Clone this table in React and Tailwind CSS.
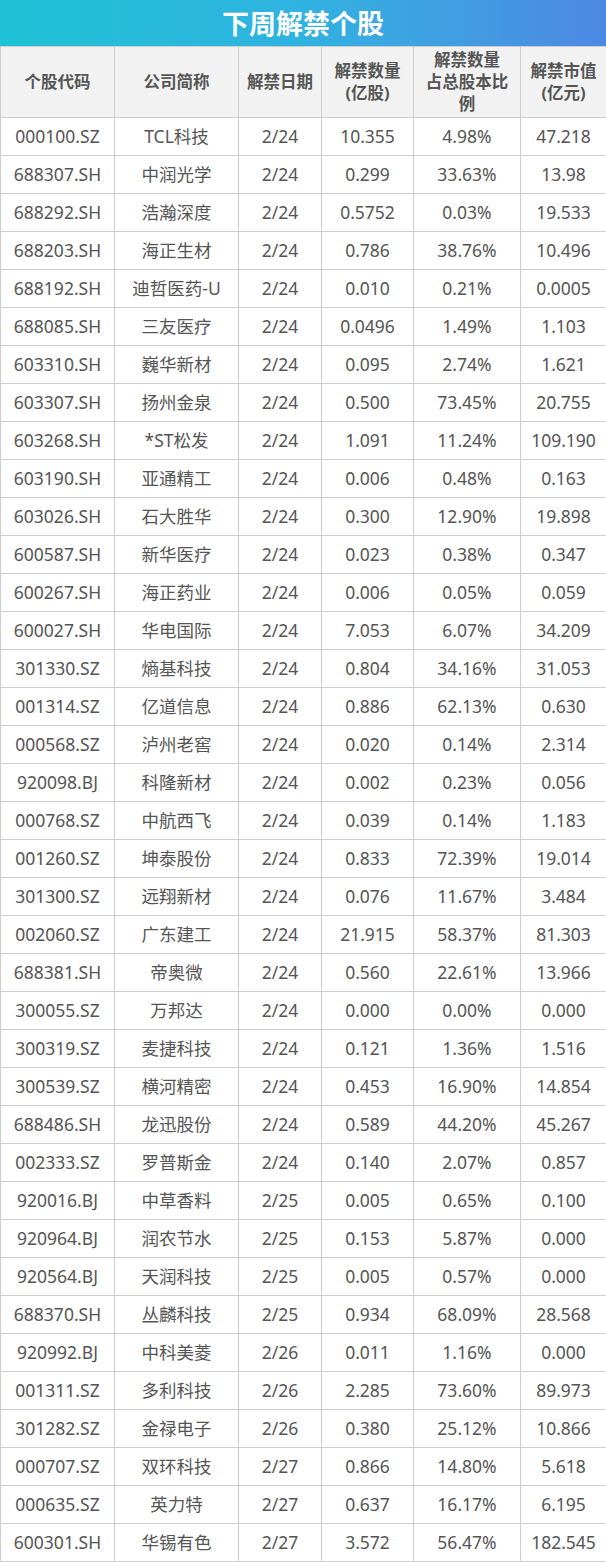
import React from "react";

const rows = [
  ["000100.SZ", "TCL科技", "2/24", "10.355", "4.98%", "47.218"],
  ["688307.SH", "中润光学", "2/24", "0.299", "33.63%", "13.98"],
  ["688292.SH", "浩瀚深度", "2/24", "0.5752", "0.03%", "19.533"],
  ["688203.SH", "海正生材", "2/24", "0.786", "38.76%", "10.496"],
  ["688192.SH", "迪哲医药-U", "2/24", "0.010", "0.21%", "0.0005"],
  ["688085.SH", "三友医疗", "2/24", "0.0496", "1.49%", "1.103"],
  ["603310.SH", "巍华新材", "2/24", "0.095", "2.74%", "1.621"],
  ["603307.SH", "扬州金泉", "2/24", "0.500", "73.45%", "20.755"],
  ["603268.SH", "*ST松发", "2/24", "1.091", "11.24%", "109.190"],
  ["603190.SH", "亚通精工", "2/24", "0.006", "0.48%", "0.163"],
  ["603026.SH", "石大胜华", "2/24", "0.300", "12.90%", "19.898"],
  ["600587.SH", "新华医疗", "2/24", "0.023", "0.38%", "0.347"],
  ["600267.SH", "海正药业", "2/24", "0.006", "0.05%", "0.059"],
  ["600027.SH", "华电国际", "2/24", "7.053", "6.07%", "34.209"],
  ["301330.SZ", "熵基科技", "2/24", "0.804", "34.16%", "31.053"],
  ["001314.SZ", "亿道信息", "2/24", "0.886", "62.13%", "0.630"],
  ["000568.SZ", "泸州老窖", "2/24", "0.020", "0.14%", "2.314"],
  ["920098.BJ", "科隆新材", "2/24", "0.002", "0.23%", "0.056"],
  ["000768.SZ", "中航西飞", "2/24", "0.039", "0.14%", "1.183"],
  ["001260.SZ", "坤泰股份", "2/24", "0.833", "72.39%", "19.014"],
  ["301300.SZ", "远翔新材", "2/24", "0.076", "11.67%", "3.484"],
  ["002060.SZ", "广东建工", "2/24", "21.915", "58.37%", "81.303"],
  ["688381.SH", "帝奥微", "2/24", "0.560", "22.61%", "13.966"],
  ["300055.SZ", "万邦达", "2/24", "0.000", "0.00%", "0.000"],
  ["300319.SZ", "麦捷科技", "2/24", "0.121", "1.36%", "1.516"],
  ["300539.SZ", "横河精密", "2/24", "0.453", "16.90%", "14.854"],
  ["688486.SH", "龙迅股份", "2/24", "0.589", "44.20%", "45.267"],
  ["002333.SZ", "罗普斯金", "2/24", "0.140", "2.07%", "0.857"],
  ["920016.BJ", "中草香料", "2/25", "0.005", "0.65%", "0.100"],
  ["920964.BJ", "润农节水", "2/25", "0.153", "5.87%", "0.000"],
  ["920564.BJ", "天润科技", "2/25", "0.005", "0.57%", "0.000"],
  ["688370.SH", "丛麟科技", "2/25", "0.934", "68.09%", "28.568"],
  ["920992.BJ", "中科美菱", "2/26", "0.011", "1.16%", "0.000"],
  ["001311.SZ", "多利科技", "2/26", "2.285", "73.60%", "89.973"],
  ["301282.SZ", "金禄电子", "2/26", "0.380", "25.12%", "10.866"],
  ["000707.SZ", "双环科技", "2/27", "0.866", "14.80%", "5.618"],
  ["000635.SZ", "英力特", "2/27", "0.637", "16.17%", "6.195"],
  ["600301.SH", "华锡有色", "2/27", "3.572", "56.47%", "182.545"],
];

const headers = [
  ["个股代码"],
  ["公司简称"],
  ["解禁日期"],
  ["解禁数量", "(亿股)"],
  ["解禁数量", "占总股本比", "例"],
  ["解禁市值", "(亿元)"],
];

const App = () => {
  return (
    <div
      className="w-[606px] bg-white"
      style={{ fontFamily: '"Noto Sans", "Noto Sans CJK SC", sans-serif' }}
    >
      {/* Title */}
      <div className="h-[46px] flex items-center justify-center bg-gradient-to-r from-[#1fc2d6] via-[#2fb2e0] to-[#4c88e3]">
        <h1 className="text-[27px] font-bold text-white leading-none">
          下周解禁个股
        </h1>
      </div>

      <table className="w-full table-fixed border-collapse">
        <colgroup>
          <col className="w-[114px]" />
          <col className="w-[124px]" />
          <col className="w-[83px]" />
          <col className="w-[92px]" />
          <col className="w-[107px]" />
          <col className="w-[86px]" />
        </colgroup>
        <thead>
          <tr className="h-[71px] bg-[#f2f2f2]">
            {headers.map((lines, i) => (
              <th
                key={i}
                className="border border-[#cdcdcd] px-0 text-center align-middle text-[16.5px] font-bold leading-[22px] text-[#555]"
              >
                {lines.map((l, j) => (
                  <div key={j}>{l}</div>
                ))}
              </th>
            ))}
          </tr>
        </thead>
        <tbody>
          {rows.map((r) => (
            <tr key={r[0]} className="h-[38px]">
              {r.map((c, j) => (
                <td
                  key={j}
                  className="border border-[#cdcdcd] px-0 text-center align-middle text-[17.5px] text-[#555] whitespace-nowrap"
                >
                  {c}
                </td>
              ))}
            </tr>
          ))}
        </tbody>
      </table>
    </div>
  );
};

export default App;
